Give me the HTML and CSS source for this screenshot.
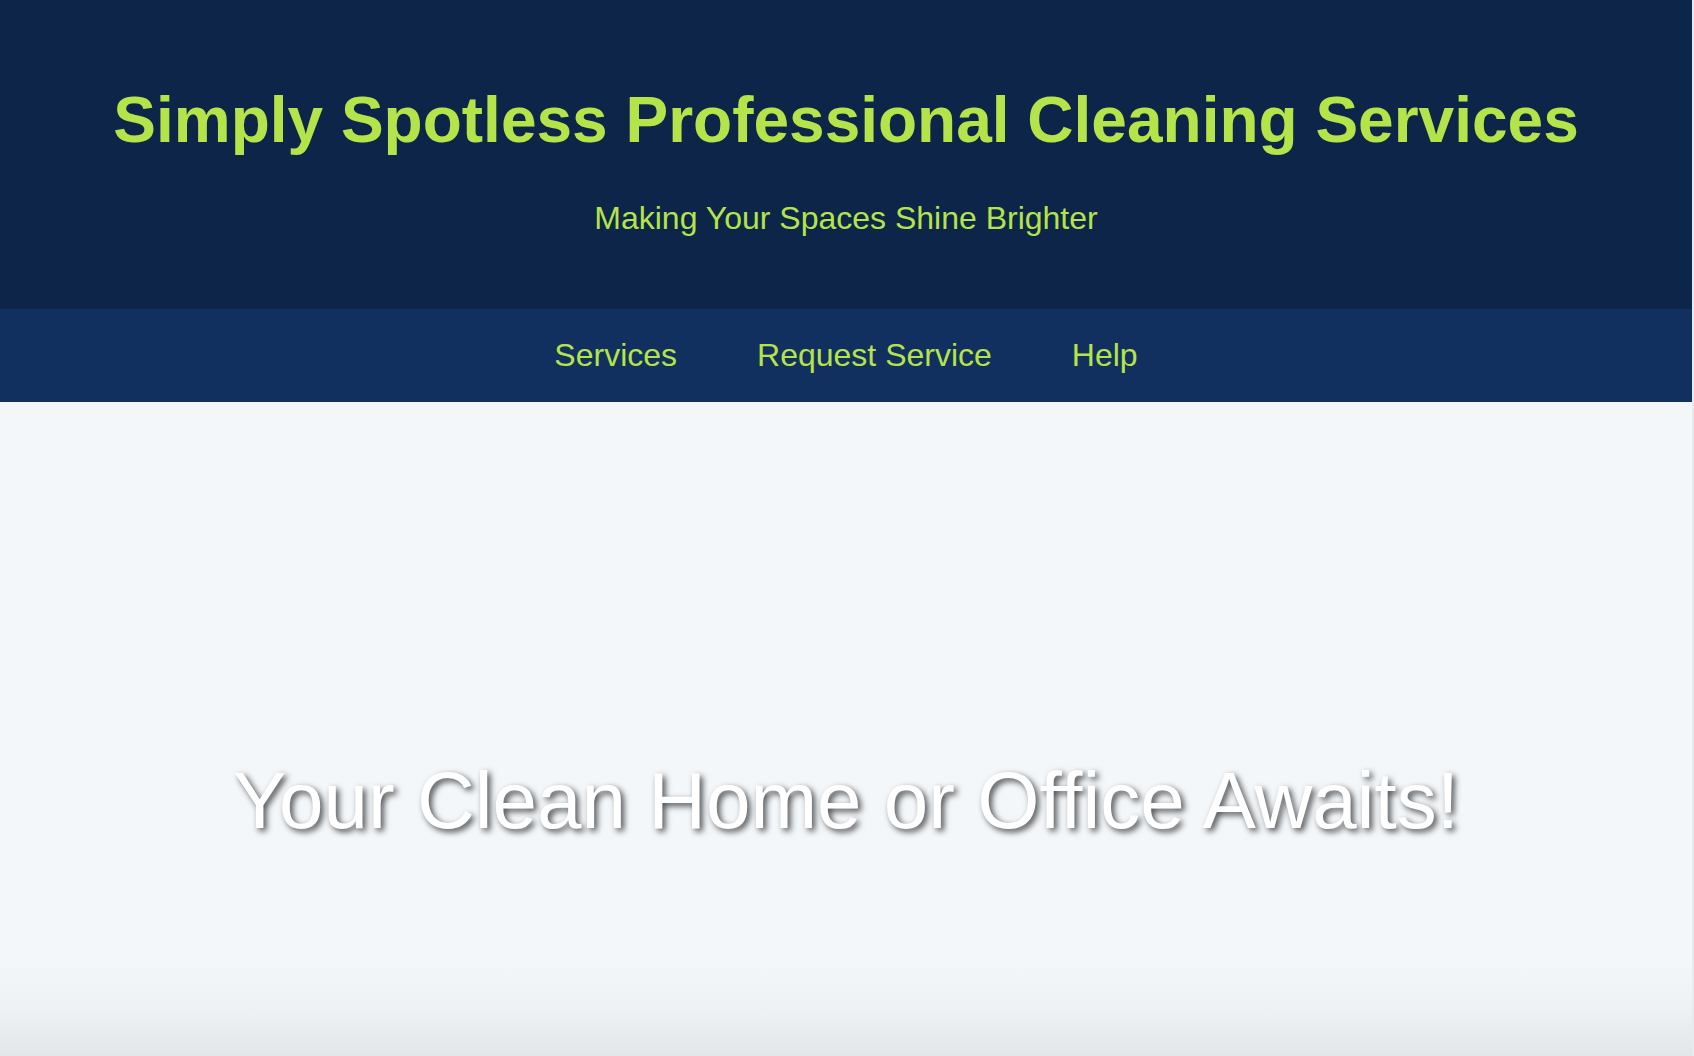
FILE: index.html
```html
<!DOCTYPE html>
<html lang="en">
<head>
<meta charset="utf-8">
<title>Simply Spotless Professional Cleaning Services</title>
<link rel="stylesheet" href="styles.css">
</head>
<body>
<div class="page">
  <header class="site-header">
    <h1 class="site-title">Simply Spotless Professional Cleaning Services</h1>
    <p class="tagline">Making Your Spaces Shine Brighter</p>
  </header>
  <nav class="site-nav">
    <a href="#services" class="nav-link">Services</a>
    <a href="#request" class="nav-link">Request Service</a>
    <a href="#help" class="nav-link">Help</a>
  </nav>
  <section class="hero">
    <h2 class="hero-title">Your Clean Home or Office Awaits!</h2>
  </section>
</div>
</body>
</html>
```
FILE: styles.css
```css
html {
  background: #e9eaec;
}
body {
  margin: 0;
  font-family: "Liberation Sans", Arial, Helvetica, sans-serif;
}
.page {
  width: calc(100% - 2px);
  background: #f3f7fa;
}
.site-header {
  background: #0c2549;
  padding: 82px 20px 71px;
  text-align: center;
}
.site-title {
  margin: 0;
  font-size: 64px;
  line-height: 76px;
  font-weight: 700;
  color: #b5e34a;
}
.tagline {
  margin: 40px 0 0;
  font-size: 32px;
  line-height: 40px;
  color: #b5e34a;
}
.site-nav {
  background: #12305f;
  padding: 26px 0 27px;
  display: flex;
  justify-content: center;
  gap: 80px;
}
.nav-link {
  font-size: 32px;
  line-height: 40px;
  color: #b5e34a;
  text-decoration: none;
}
.hero {
  height: 798px;
  display: flex;
  align-items: center;
  justify-content: center;
  background: linear-gradient(to bottom, #f3f7fa 0, #f3f7fa 560px, #eef1f4 610px, #e2e6e9 654px, #e2e6e9 100%);
}
.hero-title {
  margin: 0;
  font-size: 80px;
  line-height: 92px;
  font-weight: 400;
  color: #ffffff;
  text-shadow: 3px 3px 6px rgba(0, 0, 0, 0.7);
}
```
